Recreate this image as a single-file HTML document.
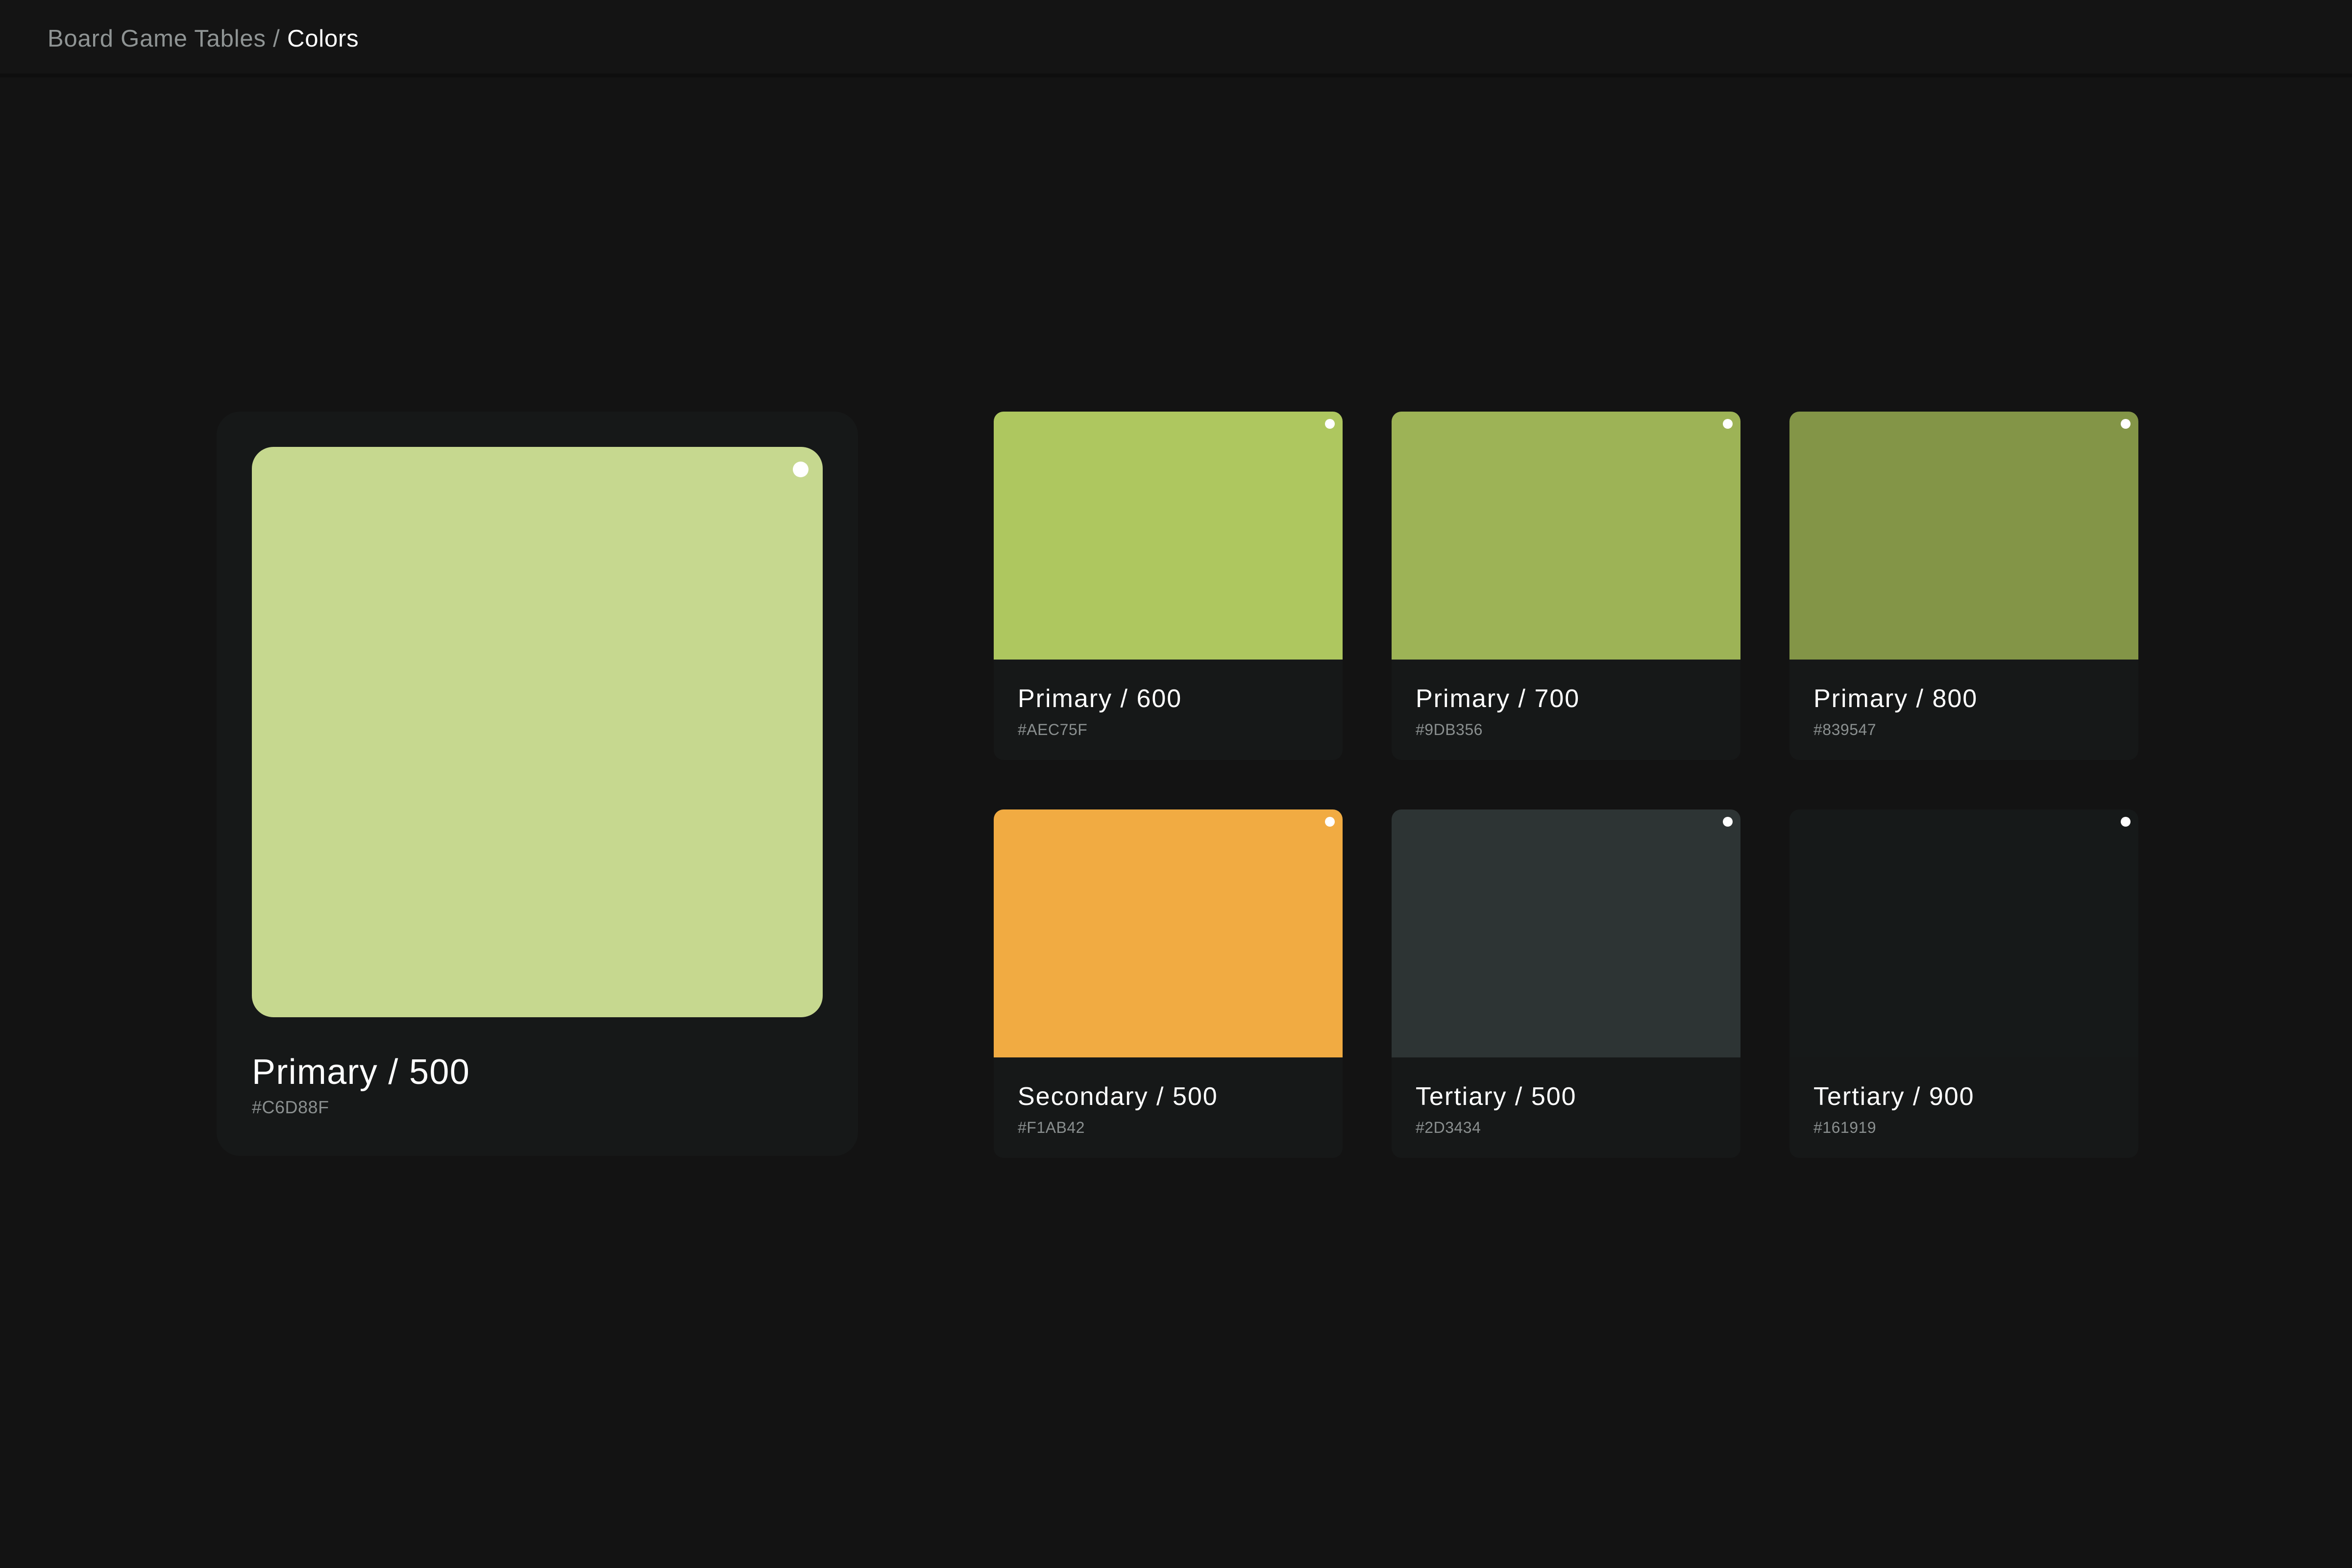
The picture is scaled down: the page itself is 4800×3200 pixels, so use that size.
<!DOCTYPE html>
<html><head><meta charset="utf-8"><style>
*{margin:0;padding:0;box-sizing:border-box}
html,body{width:4800px;height:3200px;background:#131313;overflow:hidden;font-family:"Liberation Sans",sans-serif}
.hdr{position:absolute;left:0;top:0;width:4800px;height:158px;background:#141414;border-bottom:8px solid #0e0e0e}
.hdr div{position:absolute;left:97px;top:55px;font-size:49px;line-height:49px;color:#8f9494;white-space:nowrap;letter-spacing:0.8px}
.hdr span{color:#fff}
.big{position:absolute;left:442px;top:840px;width:1309px;height:1519px;background:#161818;border-radius:48px}
.big .sw{position:absolute;left:72px;top:72px;width:1165px;height:1164px;background:#C6D88F;border-radius:44px}
.big .dot{position:absolute;right:29px;top:30px;width:32px;height:32px;border-radius:50%;background:#fff}
.big .t{position:absolute;left:72px;top:1312px;font-size:72px;line-height:72px;color:#fff;white-space:nowrap;letter-spacing:1.3px}
.big .h{position:absolute;left:72px;top:1402px;font-size:36px;line-height:36px;color:#8a8f8f;letter-spacing:0.5px}
.c{position:absolute;width:712px;height:711px;background:#161818;border-radius:20px;overflow:hidden}
.c .sw{position:absolute;left:0;top:0;width:712px;height:506px}
.c .dot{position:absolute;left:676px;top:15px;width:20px;height:20px;border-radius:50%;background:#fff}
.c .t{position:absolute;left:49px;top:560px;font-size:52px;line-height:52px;color:#fff;white-space:nowrap;letter-spacing:2px}
.c .h{position:absolute;left:49px;top:633px;font-size:32px;line-height:32px;color:#8a8f8f;letter-spacing:0.5px}
</style></head><body>
<div class="hdr"><div>Board Game Tables / <span>Colors</span></div></div>
<div class="big"><div class="sw"><div class="dot"></div></div><div class="t">Primary / 500</div><div class="h">#C6D88F</div></div>

<div class="c" style="left:2028px;top:840px"><div class="sw" style="background:#AEC75F"></div><div class="dot"></div><div class="t">Primary / 600</div><div class="h">#AEC75F</div></div>
<div class="c" style="left:2840px;top:840px"><div class="sw" style="background:#9DB356"></div><div class="dot"></div><div class="t">Primary / 700</div><div class="h">#9DB356</div></div>
<div class="c" style="left:3652px;top:840px"><div class="sw" style="background:#839547"></div><div class="dot"></div><div class="t">Primary / 800</div><div class="h">#839547</div></div>

<div class="c" style="left:2028px;top:1652px"><div class="sw" style="background:#F1AB42"></div><div class="dot"></div><div class="t">Secondary / 500</div><div class="h">#F1AB42</div></div>
<div class="c" style="left:2840px;top:1652px"><div class="sw" style="background:#2D3434"></div><div class="dot"></div><div class="t">Tertiary / 500</div><div class="h">#2D3434</div></div>
<div class="c" style="left:3652px;top:1652px"><div class="sw" style="background:#161919"></div><div class="dot"></div><div class="t">Tertiary / 900</div><div class="h">#161919</div></div>
</body></html>
